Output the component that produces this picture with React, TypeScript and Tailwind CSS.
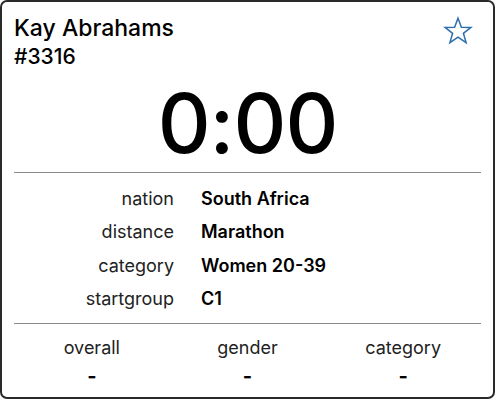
const details = [
  { label: "nation", value: "South Africa" },
  { label: "distance", value: "Marathon" },
  { label: "category", value: "Women 20-39" },
  { label: "startgroup", value: "C1" },
];

const ranks = ["overall", "gender", "category"];

function StarOutline() {
  return (
    <svg className="mt-[14px] mr-[8px] h-[30px] w-[30px]" viewBox="0 0 30 30" fill="none">
      <path
        d="M15 2.2L18.4 11.2L28 11.4L20.4 17.3L23.1 26.6L15 21.1L6.9 26.6L9.6 17.3L2 11.4L11.6 11.2Z"
        stroke="#2e6eae"
        strokeWidth="1.5"
        strokeLinejoin="miter"
      />
    </svg>
  );
}

export default function App() {
  return (
    <div className="h-[400px] w-[495px] bg-white font-['Inter','Liberation_Sans',sans-serif] text-black">
      <div className="flex h-[399px] w-[495px] flex-col rounded-[7px] border-2 border-[#2a2a2a] px-[12px]">
        <div className="flex items-start justify-between">
          <div className="pt-[12px] pl-[0px]">
            <h1 className="text-[23px] leading-[29px] font-medium">Kay Abrahams</h1>
            <p className="text-[21px] leading-[27px] font-medium">#3316</p>
          </div>
          <StarOutline />
        </div>

        <div className="flex h-[102px] items-center justify-center">
          <span className="mt-[6px] text-[82px] leading-none font-medium tracking-[-1px]">0:00</span>
        </div>

        <div className="border-t-[1.5px] border-[#8a8a8a]" />

        <div className="flex flex-col gap-[7px] pt-[13px] pb-[11px]">
          {details.map((d) => (
            <div key={d.label} className="flex items-center text-[18px] leading-[26.3px]">
              <span className="w-[160px] text-right text-[#222]">{d.label}</span>
              <span className="ml-[27px] font-semibold">{d.value}</span>
            </div>
          ))}
        </div>

        <div className="border-t-[1.5px] border-[#8a8a8a]" />

        <div className="grid grid-cols-3 pt-[12px]">
          {ranks.map((r) => (
            <div key={r} className="flex flex-col items-center">
              <span className="text-[18px] leading-[24px] text-[#222]">{r}</span>
              <span className="text-[20px] leading-[32px] font-bold">-</span>
            </div>
          ))}
        </div>
      </div>
    </div>
  );
}
